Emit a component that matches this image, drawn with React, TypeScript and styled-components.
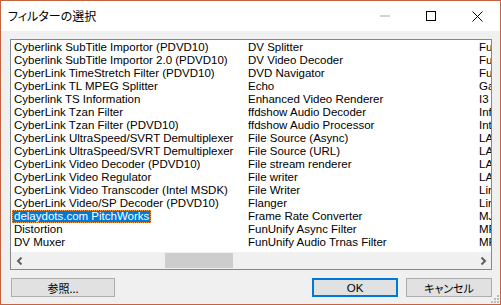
import React from "react";
import styled, { createGlobalStyle, css } from "styled-components";

const GlobalStyle = createGlobalStyle`
  html, body { margin: 0; padding: 0; background: #ffffff; }
  * { box-sizing: border-box; }
`;

const Window = styled.div`
  position: relative;
  width: 501px;
  height: 305px;
  border: 1px solid #c4633f;
  background: #f0f0f0;
  display: flex;
  flex-direction: column;
  overflow: hidden;
`;

const TitleBar = styled.div`
  height: 30px;
  flex-shrink: 0;
  background: #ffffff;
  display: flex;
  align-items: center;
  padding-left: 7px;
`;

const Title = styled.div`
  flex: 1;
  font-family: "Noto Sans CJK JP", sans-serif;
  font-feature-settings: "palt";
  font-size: 12px;
  color: #000;
  padding-bottom: 1px;
`;

const CaptionButton = styled.div`
  width: 46px;
  height: 100%;
  display: flex;
  align-items: center;
  justify-content: center;
`;

const Body = styled.div`
  flex: 1;
  display: flex;
  flex-direction: column;
  gap: 8px;
  padding: 8px 8px 7px 9px;
`;

const ListBox = styled.div`
  height: 231px;
  border: 1px solid #828790;
  background: #ffffff;
  display: flex;
  flex-direction: column;
  overflow: hidden;
`;

const Columns = styled.div`
  flex: 1;
  display: flex;
  padding: 1px 0 0 1px;
  overflow: hidden;
`;

const Column = styled.div<{ $w: number }>`
  width: ${(p) => p.$w}px;
  flex-shrink: 0;
  display: flex;
  flex-direction: column;
`;

const Item = styled.div`
  height: 13px;
  line-height: 13px;
  white-space: nowrap;
  font-family: "Liberation Sans", Arial, sans-serif;
  font-size: 11.5px;
  color: #000;
`;

const ItemText = styled.span<{ $sel?: boolean }>`
  display: inline-block;
  height: 13px;
  padding: 0 2px;
  ${(p) =>
    p.$sel &&
    css`
      background: #0078d7;
      color: #ffffff;
      outline: 1px dotted #ff9e4a;
      outline-offset: -1px;
    `}
`;

const ScrollBar = styled.div`
  height: 17px;
  flex-shrink: 0;
  display: flex;
  background: #f0f0f0;
`;

const ScrollArrow = styled.div`
  width: 17px;
  display: flex;
  align-items: center;
  justify-content: center;
`;

const Track = styled.div<{ $offset: number }>`
  flex: 1;
  display: flex;
  align-items: center;
  padding-left: ${(p) => p.$offset}px;
`;

const Thumb = styled.div`
  width: 68px;
  height: 15px;
  background: #cdcdcd;
`;

const Footer = styled.div`
  height: 19px;
  display: flex;
  align-items: center;
  gap: 8px;
  padding-left: 1px;
`;

const Spacer = styled.div`
  flex: 1;
`;

const Button = styled.div<{ $w: number; $default?: boolean; $latin?: boolean }>`
  width: ${(p) => p.$w}px;
  height: 19px;
  display: flex;
  align-items: center;
  justify-content: center;
  background: #e1e1e1;
  border: ${(p) => (p.$default ? "2px solid #0078d7" : "1px solid #adadad")};
  font-family: ${(p) =>
    p.$latin
      ? `"Liberation Sans", Arial, sans-serif`
      : `"Noto Sans CJK JP", sans-serif`};
  font-feature-settings: "palt";
  font-size: ${(p) => (p.$latin ? "11.5px" : "11px")};
  color: #000;
`;

const Grip = styled.svg`
  position: absolute;
  right: 1px;
  bottom: 1px;
`;

const col1 = [
  "Cyberlink SubTitle Importor (PDVD10)",
  "Cyberlink SubTitle Importor 2.0 (PDVD10)",
  "CyberLink TimeStretch Filter (PDVD10)",
  "CyberLink TL MPEG Splitter",
  "Cyberlink TS Information",
  "CyberLink Tzan Filter",
  "CyberLink Tzan Filter (PDVD10)",
  "CyberLink UltraSpeed/SVRT Demultiplexer",
  "CyberLink UltraSpeed/SVRT Demultiplexer",
  "CyberLink Video Decoder (PDVD10)",
  "CyberLink Video Regulator",
  "CyberLink Video Transcoder (Intel MSDK)",
  "CyberLink Video/SP Decoder (PDVD10)",
  "delaydots.com PitchWorks",
  "Distortion",
  "DV Muxer",
];

const col2 = [
  "DV Splitter",
  "DV Video Decoder",
  "DVD Navigator",
  "Echo",
  "Enhanced Video Renderer",
  "ffdshow Audio Decoder",
  "ffdshow Audio Processor",
  "File Source (Async)",
  "File Source (URL)",
  "File stream renderer",
  "File writer",
  "File Writer",
  "Flanger",
  "Frame Rate Converter",
  "FunUnify Async Filter",
  "FunUnify Audio Trnas Filter",
];

const col3 = [
  "FunUnify Audio Wave Filter",
  "FunUnify Video Filter",
  "FunUnify Video Sync Filter",
  "Gargle",
  "I3 Audio Filter",
  "Infinite Pin Tee Filter",
  "Internal Script Command Renderer",
  "LAV Audio Decoder",
  "LAV Splitter",
  "LAV Splitter Source",
  "LAV Video Decoder",
  "Line 21 Decoder",
  "Line 21 Decoder 2",
  "MJPEG Decompressor",
  "MPEG-2 Splitter",
  "MPEG-I Stream Splitter",
];

const SELECTED = "delaydots.com PitchWorks";

function ListColumn({ items, width }: { items: string[]; width: number }) {
  return (
    <Column $w={width}>
      {items.map((t, i) => (
        <Item key={i}>
          <ItemText $sel={t === SELECTED}>{t}</ItemText>
        </Item>
      ))}
    </Column>
  );
}

export default function App() {
  return (
    <>
      <GlobalStyle />
      <Window>
        <TitleBar>
          <Title>フィルターの選択</Title>
          <CaptionButton>
            <svg width="10" height="10" viewBox="0 0 10 10">
              <rect x="0" y="4.5" width="10" height="1" fill="#a8a8a8" />
            </svg>
          </CaptionButton>
          <CaptionButton>
            <svg width="10" height="10" viewBox="0 0 10 10">
              <rect x="0.5" y="0.5" width="9" height="9" fill="none" stroke="#000" strokeWidth="1" />
            </svg>
          </CaptionButton>
          <CaptionButton>
            <svg width="11" height="11" viewBox="0 0 11 11">
              <path d="M0.5 0.5 L10.5 10.5 M10.5 0.5 L0.5 10.5" stroke="#000" strokeWidth="1" />
            </svg>
          </CaptionButton>
        </TitleBar>
        <Body>
          <ListBox>
            <Columns>
              <ListColumn items={col1} width={234} />
              <ListColumn items={col2} width={231} />
              <ListColumn items={col3} width={231} />
            </Columns>
            <ScrollBar>
              <ScrollArrow>
                <svg width="8" height="8" viewBox="0 0 8 8">
                  <path d="M5.5 0.5 L2 4 L5.5 7.5" fill="none" stroke="#606060" strokeWidth="2" />
                </svg>
              </ScrollArrow>
              <Track $offset={137}>
                <Thumb />
              </Track>
              <ScrollArrow>
                <svg width="8" height="8" viewBox="0 0 8 8">
                  <path d="M2.5 0.5 L6 4 L2.5 7.5" fill="none" stroke="#606060" strokeWidth="2" />
                </svg>
              </ScrollArrow>
            </ScrollBar>
          </ListBox>
          <Footer>
            <Button $w={104}>参照...</Button>
            <Spacer />
            <Button $w={86} $default $latin>
              OK
            </Button>
            <Button $w={86}>キャンセル</Button>
          </Footer>
        </Body>
        <Grip width="8" height="8" viewBox="0 0 8 8">
          <rect x="6" y="0" width="2" height="2" fill="#bcbcbc" />
          <rect x="3" y="3" width="2" height="2" fill="#bcbcbc" />
          <rect x="6" y="3" width="2" height="2" fill="#bcbcbc" />
          <rect x="0" y="6" width="2" height="2" fill="#bcbcbc" />
          <rect x="3" y="6" width="2" height="2" fill="#bcbcbc" />
          <rect x="6" y="6" width="2" height="2" fill="#bcbcbc" />
        </Grip>
      </Window>
    </>
  );
}
